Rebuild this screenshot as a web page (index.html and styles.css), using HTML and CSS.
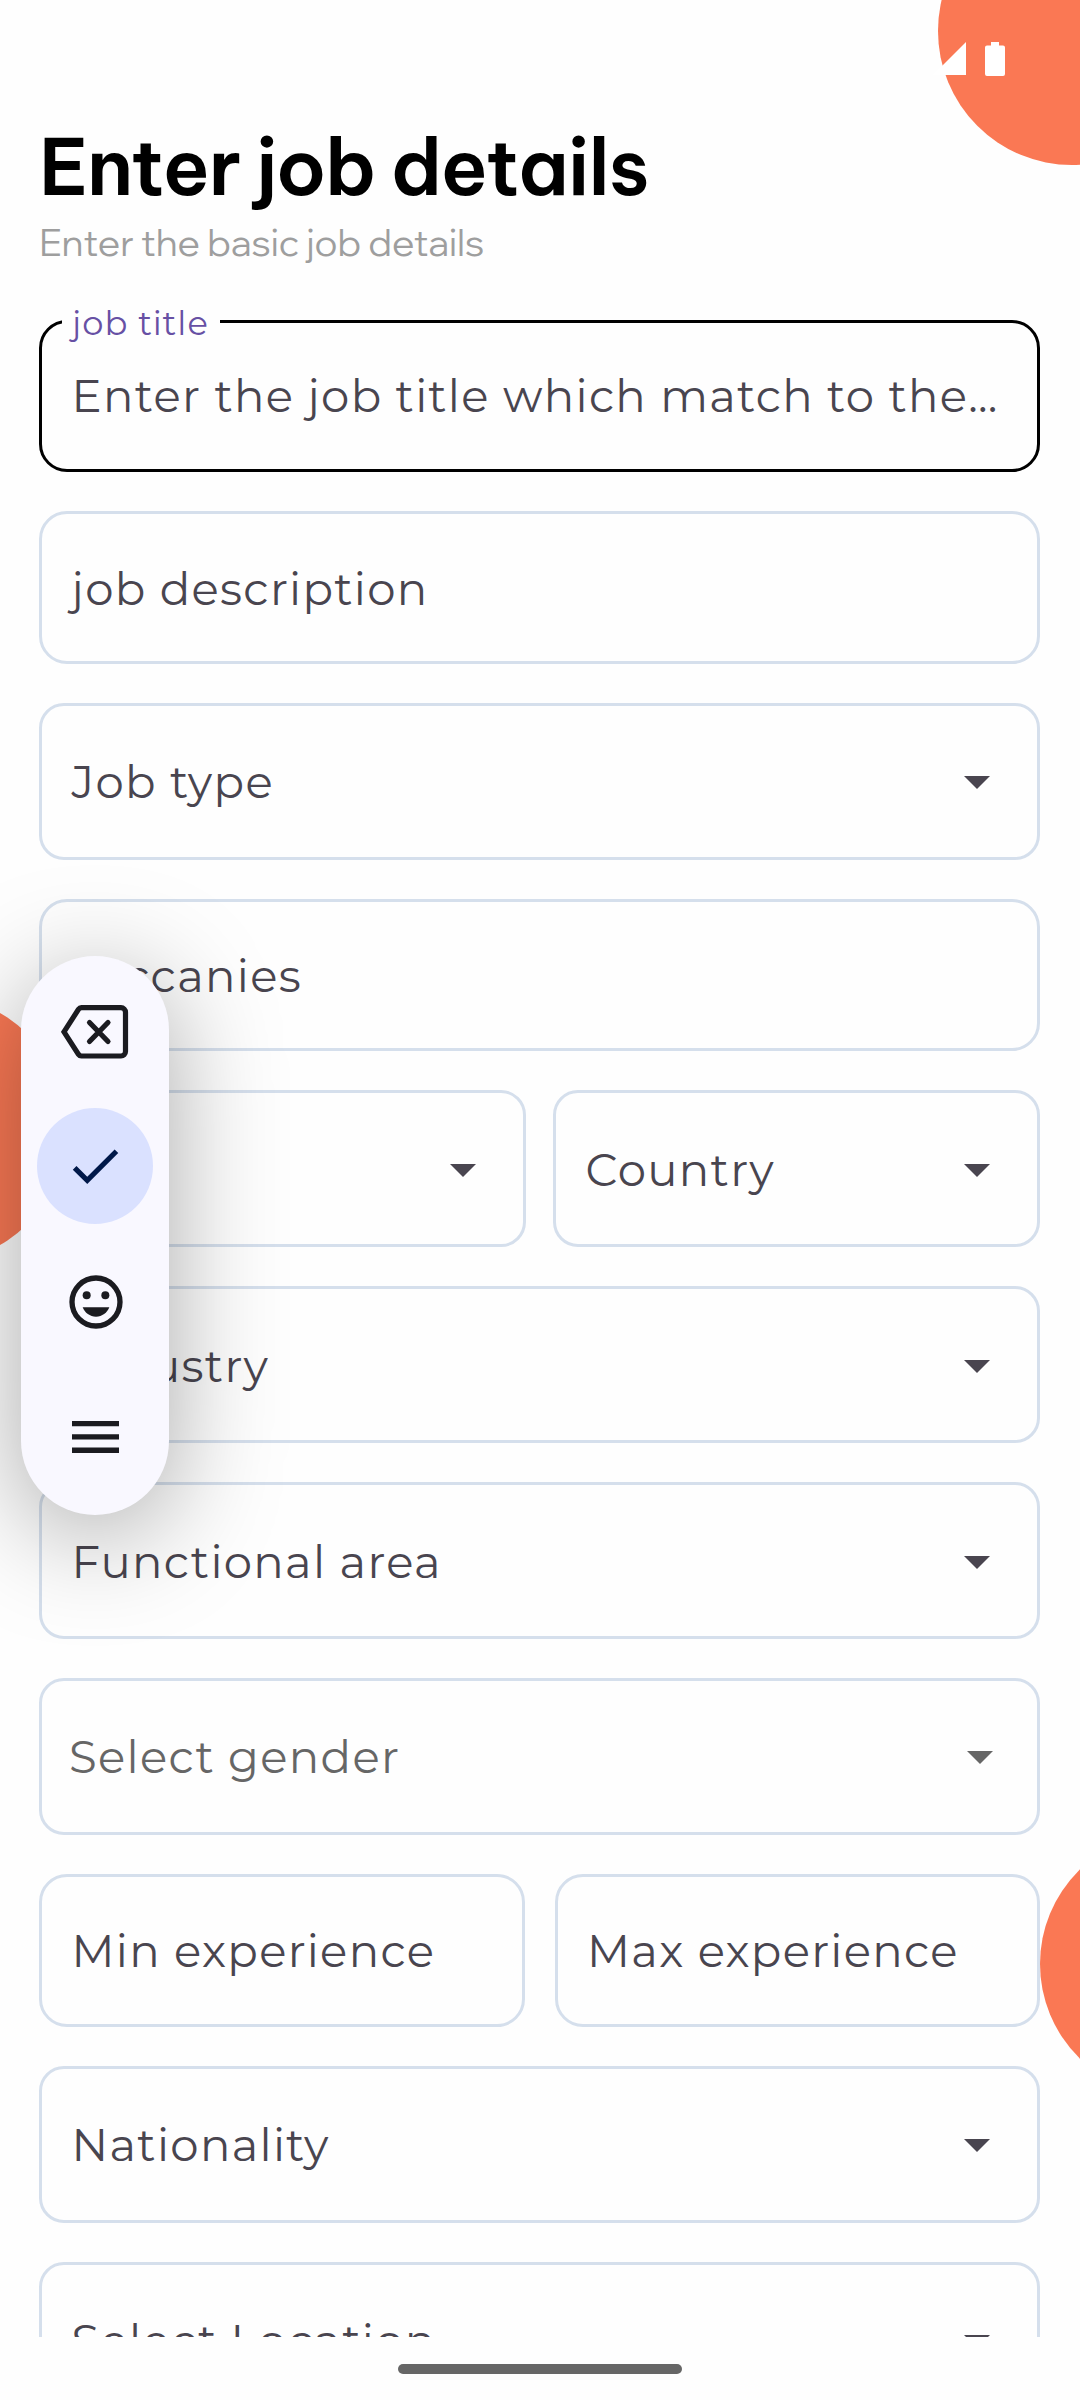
FILE: index.html
```
<!DOCTYPE html>
<html lang="en">
<head>
<meta charset="utf-8">
<title>Enter job details</title>
<link rel="stylesheet" href="styles.css">
</head>
<body>
<main class="screen">
  <div class="circle circle-top"></div>
  <div class="circle circle-left"></div>
  <div class="circle circle-right"></div>

  <div class="status">
    <svg class="signal" viewBox="0 0 33 33"><path d="M33 0V33H0z"/></svg>
    <svg class="battery" viewBox="0 0 20 34"><path d="M6 0h8v3.400h4A2 2 0 0 1 20 5.400V32a2 2 0 0 1-2 2H2a2 2 0 0 1-2-2V5.400a2 2 0 0 1 2-2h4z"/></svg>
  </div>

  <div class="content">
    <h1 class="title">Enter job details</h1>
    <p class="subtitle">Enter the basic job details</p>

    <form class="form">
      <div class="field focused">
        <span class="float-label">job title</span>
        <span class="label">Enter the job title which match to the…</span>
      </div>
      <div class="field"><span class="label">job description</span></div>
      <div class="field select"><span class="label">Job type</span><svg class="caret" viewBox="0 0 26 13"><path d="M0 0h26L13 13z"/></svg></div>
      <div class="field"><span class="label">vaccanies</span></div>
      <div class="row">
        <div class="field select"><span class="label">City</span><svg class="caret" viewBox="0 0 26 13"><path d="M0 0h26L13 13z"/></svg></div>
        <div class="field select"><span class="label">Country</span><svg class="caret" viewBox="0 0 26 13"><path d="M0 0h26L13 13z"/></svg></div>
      </div>
      <div class="field select"><span class="label">Industry</span><svg class="caret" viewBox="0 0 26 13"><path d="M0 0h26L13 13z"/></svg></div>
      <div class="field select"><span class="label">Functional area</span><svg class="caret" viewBox="0 0 26 13"><path d="M0 0h26L13 13z"/></svg></div>
      <div class="field select hint"><span class="label">Select gender</span><svg class="caret" viewBox="0 0 26 13"><path d="M0 0h26L13 13z"/></svg></div>
      <div class="row wide">
        <div class="field"><span class="label">Min experience</span></div>
        <div class="field"><span class="label">Max experience</span></div>
      </div>
      <div class="field select"><span class="label">Nationality</span><svg class="caret" viewBox="0 0 26 13"><path d="M0 0h26L13 13z"/></svg></div>
      <div class="field select"><span class="label">Select Location</span><svg class="caret" viewBox="0 0 26 13"><path d="M0 0h26L13 13z"/></svg></div>
    </form>
  </div>

  <div class="toolbar">
    <div class="tool">
      <svg width="68" height="54" viewBox="0 0 68 54" fill="none" stroke="#1b1b20" stroke-width="5.200" stroke-linejoin="round" stroke-linecap="round"><path d="M20.500 2.700H60a4.500 4.500 0 0 1 4.500 4.500V46.500a4.500 4.500 0 0 1-4.500 4.500H20.500a4 4 0 0 1-3-1.600L3 26.850 17.500 4.300a4 4 0 0 1 3-1.600z" stroke-linejoin="miter"/><path d="M28.500 17.500L47 36.500M47 17.500L28.500 36.500"/></svg>
    </div>
    <div class="tool active">
      <svg width="62" height="62" viewBox="0 0 24 24"><path fill="#001849" d="M9 16.170L4.830 12l-1.420 1.410L9 19 21 7l-1.410-1.410z"/></svg>
    </div>
    <div class="tool">
      <svg width="64" height="64" viewBox="0 0 24 24" fill="#1b1b20"><path fill-rule="evenodd" d="M12 2a10 10 0 1 0 0 20 10 10 0 0 0 0-20zm0 18a8 8 0 1 1 0-16 8 8 0 0 1 0 16z"/><circle cx="8.500" cy="9.500" r="1.500"/><circle cx="15.500" cy="9.500" r="1.500"/><path d="M7 14c.8 2.100 2.700 3.500 5 3.500s4.200-1.400 5-3.500z"/></svg>
    </div>
    <div class="tool">
      <svg width="47" height="32" viewBox="0 0 47 32" fill="#1b1b20"><path d="M0 0h47v5.300H0zM0 13.300h47v5.300H0zM0 26.600h47v5.300H0z"/></svg>
    </div>
  </div>

  <div class="navbar"><div class="home"></div></div>
</main>
</body>
</html>
```
FILE: styles.css
```
* {
  box-sizing: border-box;
}

body {
  margin: 0;
  background: #fefefe;
}

.screen {
  position: relative;
  display: flex;
  flex-direction: column;
  width: 1080px;
  height: 2400px;
  overflow: hidden;
  font-family: Montserrat, Inter, sans-serif;
}

/* Decorative circles behind the form */
.circle {
  position: absolute;
  width: 268px;
  height: 268px;
  border-radius: 50%;
  background: #fa7854;
}

.circle-top {
  left: 938px;
  top: -103px;
}

.circle-left {
  left: -201px;
  top: 995px;
}

.circle-right {
  left: 1040px;
  top: 1832px;
  width: 264px;
  height: 264px;
}

.status {
  position: absolute;
  top: 42px;
  right: 75px;
  display: flex;
  gap: 19px;
  fill: #fff;
}

.signal {
  width: 33px;
  height: 33px;
}

.battery {
  width: 20px;
  height: 34px;
}

.content {
  position: relative;
  height: 2337px;
  padding: 120px 40px 0 39px;
  overflow: hidden;
}

.title {
  margin: 0;
  color: #000;
  font: 600 78px/94px "Be Vietnam Pro", Inter, sans-serif;
  letter-spacing: -1.3px;
  word-spacing: -1.5px;
  white-space: nowrap;
}

.subtitle {
  margin: 4px 0 0;
  color: #9e9e9e;
  font: 400 37.4px/48px "Wix Madefor Display", Montserrat, sans-serif;
}

.form {
  display: flex;
  flex-direction: column;
  gap: 39.3px;
  margin-top: 54px;
}

.field {
  position: relative;
  display: flex;
  flex: none;
  align-items: center;
  justify-content: space-between;
  height: 152.2px;
  padding: 1px 47px 0 29.5px;
  border: 3px solid #d5dfec;
  border-radius: 28px;
  color: #49454f;
}

.select {
  height: 156.7px;
  border-radius: 25px;
}

.label {
  font-size: 45px;
  letter-spacing: 1.33px;
  white-space: nowrap;
}

.caret {
  width: 26px;
  height: 13px;
  margin-top: 2px;
  fill: currentColor;
}

.hint {
  padding: 0 44px 0 27px;
  color: #666;
}

.focused {
  padding: 0 0 2px 29.5px;
  border-color: #000;
}

.float-label {
  position: absolute;
  left: 20px;
  top: -21px;
  padding: 0 11px 0 10px;
  background: #fefefe;
  color: #6750a4;
  font-size: 33.75px;
  line-height: 42px;
  letter-spacing: 1px;
}

.row {
  display: grid;
  grid-template-columns: 487px 487px;
  justify-content: space-between;
}

.wide {
  grid-template-columns: 485.5px 485.5px;
}

/* Floating keyboard toolbar */
.toolbar {
  position: absolute;
  left: 21px;
  top: 956px;
  display: flex;
  flex-direction: column;
  align-items: center;
  gap: 19px;
  width: 148px;
  height: 559px;
  padding-top: 17px;
  border-radius: 74px;
  background: #f9f8ff;
  box-shadow: 0 20px 110px rgba(0, 0, 0, .34);
}

.tool {
  display: flex;
  align-items: center;
  justify-content: center;
  width: 116px;
  height: 116px;
  border-radius: 50%;
}

.tool:first-child,
.tool:last-child {
  padding-top: 2px;
}

.tool:nth-child(3) {
  padding: 2px 0 0 1px;
}

.active {
  background: #dae1ff;
}

.navbar {
  display: flex;
  justify-content: center;
  padding-top: 27px;
}

.home {
  width: 284px;
  height: 10px;
  border-radius: 5px;
  background: #666;
}
```
